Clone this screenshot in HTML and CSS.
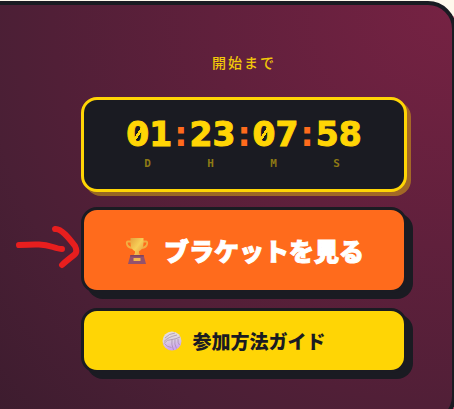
FILE: index.html
```html
<!DOCTYPE html>
<html lang="ja">
<head>
<meta charset="utf-8">
<meta name="viewport" content="width=device-width, initial-scale=1">
<title>開始まで</title>
<link rel="stylesheet" href="styles.css">
</head>
<body>
<main class="hero">
  <section class="actions">
    <p class="eyebrow">開始まで</p>
    <div class="timer">
      <div class="digits"><span><span class="zero">0</span>1</span><span class="colon">:</span><span>23</span><span class="colon">:</span><span><span class="zero">0</span>7</span><span class="colon">:</span><span>58</span></div>
      <div class="units"><span>D</span><span>H</span><span>M</span><span>S</span></div>
    </div>
    <button class="btn btn-primary" type="button">
      <svg class="trophy" viewBox="0 -1 26 28" aria-hidden="true">
        <defs>
          <linearGradient id="gold" x1="0" x2="1" y1="0" y2="1">
            <stop offset="0" stop-color="#e6a23c"/><stop offset=".5" stop-color="#f6cf58"/><stop offset="1" stop-color="#e8923c"/>
          </linearGradient>
        </defs>
        <path d="M7 4.500H4Q2.600 4.500 2.800 6.500Q3.500 10.500 8.500 11M19 4.500H22Q23.400 4.500 23.200 6.500Q22.500 10.500 17.500 11" fill="none" stroke="#f2ae42" stroke-width="1.800"/>
        <path d="M6.500 1H19.500V6Q19.500 12.500 15 14.300Q14.300 16 16.500 18.500H9.500Q11.700 16 11 14.300Q6.500 12.500 6.500 6Z" fill="url(#gold)"/>
        <path d="M6.500 18H19.500L22 27H4Z" fill="#94526c"/>
        <path d="M6.500 18H19.500L20 19.500H6Z" fill="#7d4360"/>
        <rect x="9.500" y="21" width="7" height="3" rx=".5" fill="#f4b74d"/>
      </svg>
      <span>ブラケットを見る</span>
    </button>
    <button class="btn btn-secondary" type="button">
      <svg class="ball" viewBox="0 0 20 20" aria-hidden="true">
        <defs>
          <linearGradient id="ball" x1="0" x2=".3" y1="0" y2="1">
            <stop offset="0" stop-color="#e9e2df"/><stop offset=".5" stop-color="#ddd2df"/><stop offset="1" stop-color="#cda2f0"/>
          </linearGradient>
        </defs>
        <circle cx="10" cy="10" r="9.500" fill="url(#ball)"/>
        <path d="M3 7Q7 2.500 13 2M2 10.500Q6 6 15 4M1.500 13Q5 8 10 8.500Q14 8 18 6M10 8.500Q9 13 11.500 19M13 8.500Q12 13 14.500 17.500M16 8Q15.500 12 17.500 14M3 13Q5 16 9.500 16.500" fill="none" stroke="#a18aa8" stroke-width=".7"/>
      </svg>
      <span>参加方法ガイド</span>
    </button>
  </section>
</main>
<svg class="arrow" viewBox="0 0 66 46" aria-hidden="true">
  <path d="M4 21C22 20 28 20 38 23C44 25 47 25 47 25M40 5C46 4 54 14 60 22Q63 28 59 31Q50 38 47 41" />
</svg>
</body>
</html>
```
FILE: styles.css
```css
* { box-sizing: border-box; }

html, body { overflow: hidden; }

body {
  margin: 0;
  background: #fff8ec;
  font-family: "Noto Sans CJK JP", sans-serif;
}

.hero {
  margin: 1px -2px 0 -32px;
  padding: 47px 45px 47px 109px;
  border: 4px solid #1a1b22;
  border-radius: 28px;
  box-shadow: 12px 12px 0 #e0245e;
  background: radial-gradient(circle at 100% 0, #762243 0, #60203c 240px, #511f37 400px, #4a1f35 470px, #3c1c2e 620px);
}

.actions {
  display: flex;
  flex-direction: column;
  gap: 15px;
}

.eyebrow {
  margin: 0 0 10px;
  color: #f2c809;
  font-size: 14px;
  font-weight: 500;
  line-height: 20px;
  letter-spacing: 2px;
  text-align: center;
}

.timer {
  padding: 16px 28px 19px;
  border: 3px solid #ffd505;
  border-radius: 16px;
  background: #1a1b22;
  box-shadow: 4px 4px 0 rgba(255, 213, 5, 0.4);
}

.digits {
  display: flex;
  justify-content: center;
  gap: 2px;
  color: #ffd505;
  font: 700 33px/38px "DejaVu Sans", sans-serif;
  -webkit-text-stroke: 1px #ffd505;
}

.colon {
  color: #ff6b1c;
  -webkit-text-stroke: 0;
}

.zero { position: relative; }

/* Diagonal bar of the slashed zero */
.zero::after {
  content: "";
  position: absolute;
  inset: 30% 28%;
  background: linear-gradient(to bottom right, transparent 42%, #ffd505 42%, #ffd505 58%, transparent 58%);
}

.units {
  display: grid;
  grid-template-columns: repeat(4, 1fr);
  margin-top: 4px;
  padding: 0 8px 0 4px;
  color: #8d7914;
  font: 700 11px/12px "DejaVu Sans Mono", monospace;
  text-align: center;
}

.btn {
  display: flex;
  align-items: center;
  justify-content: center;
  border: 3px solid #1a1b22;
  border-radius: 16px;
  box-shadow: 6px 6px 0 #1a1b22;
  font-family: "Noto Sans CJK JP", sans-serif;
  font-weight: 900;
  cursor: pointer;
}

.btn-primary {
  gap: 14px;
  padding: 20px 24px;
  background: #ff6b1c;
  color: #fff;
  font-size: 25px;
  line-height: 40px;
  -webkit-text-stroke: 1px #fff;
}

.btn-secondary {
  gap: 10px;
  padding: 16px 24px;
  background: #ffd505;
  color: #1a1b22;
  font-size: 19px;
  line-height: 27px;
}

.trophy { width: 26px; height: 28px; }

.ball { width: 20px; height: 20px; }

.arrow {
  position: absolute;
  top: 224px;
  left: 15px;
  width: 66px;
  height: 46px;
  fill: none;
  stroke: #e81e1e;
  stroke-width: 6;
  stroke-linecap: round;
  stroke-linejoin: round;
}
```
